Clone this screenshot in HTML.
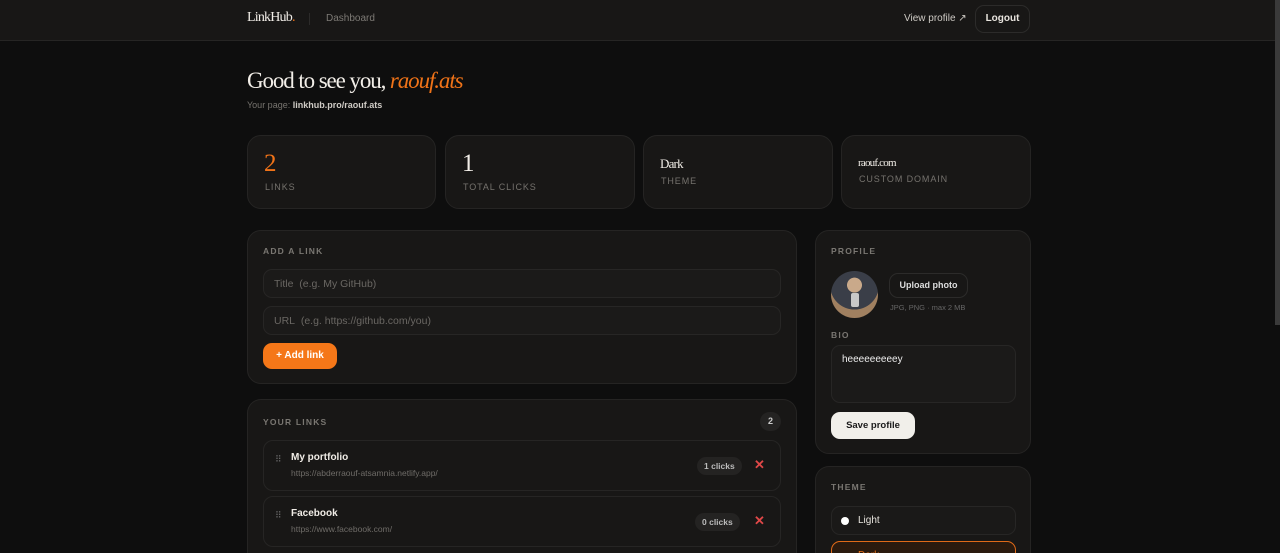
<!DOCTYPE html>
<html style="height:553px;overflow:hidden"><head><meta charset="utf-8"><style>
*{box-sizing:border-box;margin:0;padding:0}
body{width:1280px;height:553px;overflow:hidden;background:#0e0e0e;font-family:"Liberation Sans",sans-serif;color:#eee;position:relative}
.a{position:absolute}
.card{position:absolute;background:#181716;border:1px solid #252423;border-radius:14px}
.cut{border-bottom:none;border-bottom-left-radius:0;border-bottom-right-radius:0;overflow:hidden}
.serif{font-family:"Liberation Serif",serif}
.lbl{font-size:8.5px;letter-spacing:1.2px;color:#7a7772;font-weight:bold}
.slbl{font-size:9px;letter-spacing:0.9px;color:#75726d}
.inp{position:absolute;background:#1b1a19;border:1px solid #272625;border-radius:9px;font-size:10.5px;color:#6a6763;padding-left:10px;display:flex;align-items:center}
.row{position:absolute;left:15px;width:518px;height:51px;border:1px solid #262524;border-radius:10px;background:#181716}
.pill{position:absolute;background:#242322;border-radius:9px;font-size:8.5px;font-weight:bold;color:#bbb;padding:4px 7px}
</style></head><body>
<div class="a" style="left:0;top:0;width:1280px;height:41px;background:#181716;border-bottom:1px solid #262524"></div>
<div class="a serif" style="left:247px;top:10px;font-size:14px;letter-spacing:-0.8px;color:#f2eee8">LinkHub<span style="color:#f07318">.</span></div>
<div class="a" style="left:309px;top:13px;width:1px;height:12px;background:#2c2b2a"></div>
<div class="a" style="left:326px;top:13px;font-size:10px;color:#7d7a75">Dashboard</div>
<div class="a" style="left:904px;top:13px;font-size:10px;color:#cfcbc5">View profile ↗</div>
<div class="a" style="left:975px;top:5px;width:55px;height:28px;border:1px solid #2c2b2a;border-radius:9px;font-size:10px;font-weight:bold;color:#e8e4de;text-align:center;line-height:26px">Logout</div>
<div class="a" style="left:1275px;top:0;width:5px;height:325px;background:#3a3a3a"></div>

<div class="a serif" style="left:247px;top:68px;font-size:23px;letter-spacing:-1.1px;color:#f2eee8">Good to see you, <i style="color:#f07318">raouf.ats</i></div>
<div class="a" style="left:247px;top:100px;font-size:9px;color:#77746f">Your page: <b style="color:#cfcbc5">linkhub.pro/raouf.ats</b></div>

<div class="card" style="left:247px;top:135px;width:189px;height:74px"><div class="a serif" style="left:16px;top:14px;font-size:25px;color:#f07318">2</div><div class="a slbl" style="left:17px;top:46px">LINKS</div></div>
<div class="card" style="left:445px;top:135px;width:190px;height:74px"><div class="a serif" style="left:16px;top:14px;font-size:25px;color:#f2eee8">1</div><div class="a slbl" style="left:17px;top:46px">TOTAL CLICKS</div></div>
<div class="card" style="left:643px;top:135px;width:190px;height:74px"><div class="a serif" style="left:16px;top:20px;font-size:13px;color:#f2eee8;letter-spacing:-0.8px">Dark</div><div class="a slbl" style="left:17px;top:40px">THEME</div></div>
<div class="card" style="left:841px;top:135px;width:190px;height:74px"><div class="a serif" style="left:16px;top:21px;font-size:11px;color:#f2eee8;letter-spacing:-0.8px">raouf.com</div><div class="a slbl" style="left:17px;top:38px">CUSTOM DOMAIN</div></div>

<div class="card" style="left:247px;top:230px;width:550px;height:154px">
<div class="a lbl" style="left:15px;top:15px">ADD A LINK</div>
<div class="inp" style="left:15px;top:38px;width:518px;height:29px">Title&nbsp; (e.g. My GitHub)</div>
<div class="inp" style="left:15px;top:75px;width:518px;height:29px">URL&nbsp; (e.g. https://github.com/you)</div>
<div class="a" style="left:15px;top:112px;width:74px;height:26px;background:#f57718;border-radius:9px;font-size:10px;font-weight:bold;color:#fff;text-align:center;line-height:26px">+ Add link</div>
</div>

<div class="card cut" style="left:247px;top:399px;width:550px;height:154px">
<div class="a lbl" style="left:15px;top:17px">YOUR LINKS</div>
<div class="a" style="left:512px;top:12px;width:21px;height:19px;background:#242322;border-radius:10px;font-size:9px;font-weight:bold;color:#ccc;text-align:center;line-height:19px">2</div>
<div class="row" style="top:40px"><div class="a" style="left:11px;top:16px;font-size:9px;color:#666;line-height:5px">⠿</div>
<div class="a" style="left:27px;top:11px;font-size:10px;font-weight:bold;color:#f0ece6">My portfolio</div>
<div class="a" style="left:27px;top:27px;font-size:8.5px;color:#6f6c68">https://abderraouf-atsamnia.netlify.app/</div>
<div class="pill" style="left:433px;top:16px">1 clicks</div>
<div class="a" style="left:490px;top:16px;font-size:13px;font-weight:bold;color:#e04848">✕</div></div>
<div class="row" style="top:96px"><div class="a" style="left:11px;top:16px;font-size:9px;color:#666;line-height:5px">⠿</div>
<div class="a" style="left:27px;top:11px;font-size:10px;font-weight:bold;color:#f0ece6">Facebook</div>
<div class="a" style="left:27px;top:27px;font-size:8.5px;color:#6f6c68">https://www.facebook.com/</div>
<div class="pill" style="left:431px;top:16px">0 clicks</div>
<div class="a" style="left:490px;top:16px;font-size:13px;font-weight:bold;color:#e04848">✕</div></div>
</div>

<div class="card" style="left:815px;top:230px;width:216px;height:224px">
<div class="a lbl" style="left:15px;top:15px">PROFILE</div>
<div class="a" style="left:15px;top:40px;width:47px;height:47px;border-radius:50%;background:radial-gradient(circle at 50% 30%,#c9a98a 0 18%,#3a3e48 19% 60%,#a08060 61%);overflow:hidden"><div class="a" style="left:20px;top:22px;width:8px;height:14px;background:#c8c8c8;border-radius:2px"></div></div>
<div class="a" style="left:73px;top:42px;width:79px;height:25px;border:1px solid #2c2b2a;border-radius:9px;font-size:9px;font-weight:bold;color:#ddd;text-align:center;line-height:23px">Upload photo</div>
<div class="a" style="left:74px;top:72px;font-size:7.5px;color:#666">JPG, PNG · max 2 MB</div>
<div class="a lbl" style="left:15px;top:99px">BIO</div>
<div class="a" style="left:15px;top:114px;width:185px;height:58px;border:1px solid #272625;border-radius:9px;background:#1b1a19;font-size:10px;color:#eee;padding:8px 10px">heeeeeeeeey</div>
<div class="a" style="left:15px;top:181px;width:84px;height:27px;background:#f1efea;border-radius:9px;font-size:9.5px;font-weight:bold;color:#1a1a1a;text-align:center;line-height:27px">Save profile</div>
</div>

<div class="card cut" style="left:815px;top:466px;width:216px;height:87px">
<div class="a lbl" style="left:15px;top:15px">THEME</div>
<div class="a" style="left:15px;top:39px;width:185px;height:29px;border:1px solid #272625;border-radius:9px;background:#1a1918"><div class="a" style="left:9px;top:10px;width:8px;height:8px;border-radius:50%;background:#fff"></div><div class="a" style="left:26px;top:8px;font-size:10px;color:#e8e4de">Light</div></div>
<div class="a" style="left:15px;top:74px;width:185px;height:29px;border:1px solid #e06a18;border-radius:9px;background:#2a1a0e"><div class="a" style="left:26px;top:8px;font-size:10px;color:#f07318">Dark</div></div>
</div>
</body></html>
